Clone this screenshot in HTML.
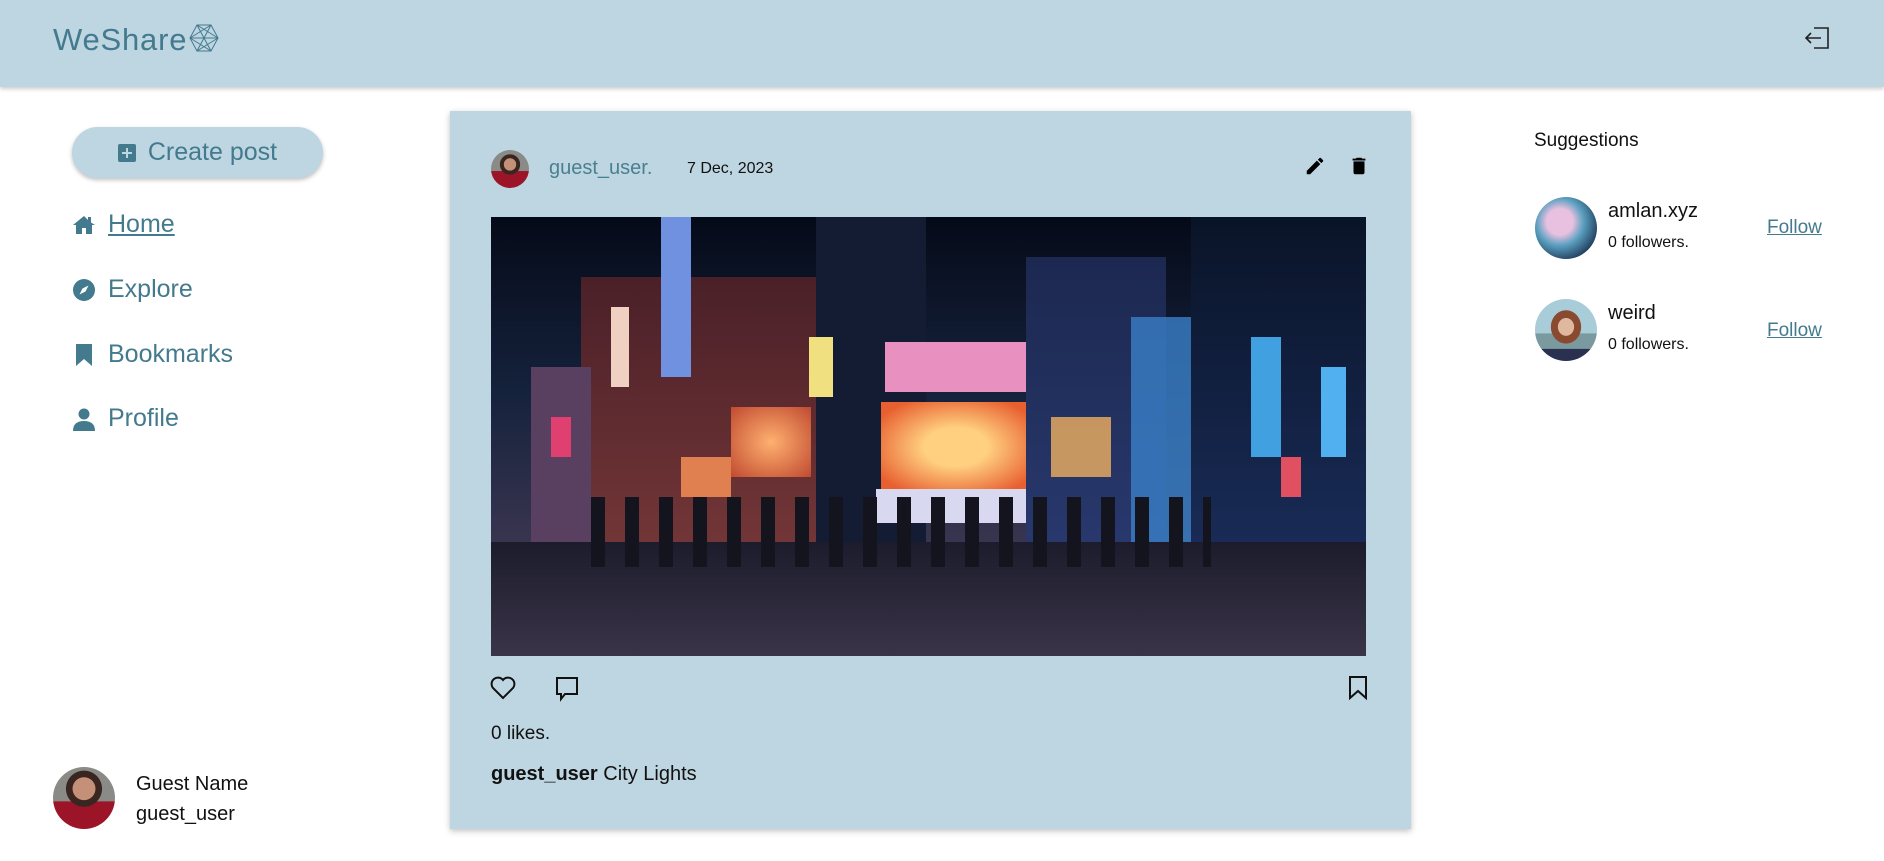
<!DOCTYPE html>
<html><head><meta charset="utf-8"><style>
*{box-sizing:border-box;margin:0;padding:0}
body{width:1884px;height:861px;background:#fff;font-family:"Liberation Sans",sans-serif;position:relative;overflow:hidden;color:#111}
.abs{position:absolute}
.hdr{left:0;top:0;width:1884px;height:87px;background:#bed6e1;box-shadow:0 2px 4px rgba(0,0,0,.2)}
.teal{color:#437a8e}
.nav{left:72px;font-size:25px;display:flex;align-items:center;gap:12px;color:#437a8e}
.nav svg{width:24px;height:24px;fill:#437a8e}
.card{left:450px;top:111px;width:961px;height:718px;background:#bed6e1;box-shadow:0 2px 6px rgba(0,0,0,.25)}
.av{border-radius:50%;overflow:hidden}
.img div{position:absolute}
</style></head><body>
<div class="abs hdr"></div>
<div class="abs teal" style="left:53px;top:22px;font-size:31px;letter-spacing:0.8px">WeShare</div>
<svg class="abs" style="left:189px;top:24px" width="30" height="28" viewBox="0 0 30 28" fill="none" stroke="#437a8e" stroke-width="1"><polygon points="8,1 22,1 29,14 22,27 8,27 1,14"/><path d="M8 1L22 27M22 1L8 27M1 14H29M8 1L29 14M22 1L1 14M1 14L22 27M29 14L8 27"/></svg>
<svg class="abs" style="left:1804px;top:26px" width="26" height="24" viewBox="0 0 26 24" fill="none" stroke="#222" stroke-width="1.6"><path d="M10 2H24V22H10"/><path d="M2 12H17M7 7L2 12L7 17"/></svg>

<div class="abs" style="left:72px;top:127px;width:251px;height:51px;border-radius:26px;background:#bed6e1;box-shadow:0 2px 4px rgba(0,0,0,.25);display:flex;align-items:center;justify-content:center;gap:12px;font-size:25px;color:#437a8e">
<svg width="18" height="18" viewBox="0 0 18 18"><rect width="18" height="18" rx="2" fill="#437a8e"/><path d="M9 4V14M4 9H14" stroke="#bed6e1" stroke-width="2"/></svg>Create post</div>

<div class="abs nav" style="top:210px"><svg viewBox="0 0 24 24"><path d="M12 3L1 12h3v9h6v-6h4v6h6v-9h3L19 9.5V4h-3v3z"/></svg><span style="text-decoration:underline">Home</span></div>
<div class="abs nav" style="top:275px"><svg viewBox="0 0 24 24"><circle cx="12" cy="12" r="11"/><path d="M16.5 7.5L13.5 13.5L7.5 16.5L10.5 10.5Z" fill="#fff"/></svg><span>Explore</span></div>
<div class="abs nav" style="top:340px"><svg viewBox="0 0 24 24"><path d="M4 1H20V23L12 16L4 23Z"/></svg><span>Bookmarks</span></div>
<div class="abs nav" style="top:404px"><svg viewBox="0 0 24 24"><circle cx="12" cy="7" r="5.5"/><path d="M1 24C1 17 5 14 12 14S23 17 23 24Z"/></svg><span>Profile</span></div>

<div class="abs av" style="left:53px;top:767px;width:62px;height:62px;background:radial-gradient(circle at 50% 35%,#c59078 0 22%,#3a2620 23% 35%,transparent 36%),linear-gradient(#8a8a86 0 55%,#9c1428 56%)"></div>
<div class="abs" style="left:136px;top:769px;font-size:20px;line-height:30px">Guest Name<br>guest_user</div>

<div class="abs card"></div>
<div class="abs av" style="left:491px;top:150px;width:38px;height:38px;background:radial-gradient(circle at 50% 38%,#c59078 0 20%,#3a2620 21% 33%,transparent 34%),linear-gradient(#8a8a86 0 55%,#9c1428 56%)"></div>
<div class="abs" style="left:549px;top:157px;font-size:20px;color:#4a7f91">guest_user.</div>
<div class="abs" style="left:687px;top:160px;font-size:16px">7 Dec, 2023</div>
<svg class="abs" style="left:1304px;top:155px" width="22" height="22" viewBox="0 0 24 24"><path d="M3 17.25V21h3.75L17.8 9.94l-3.75-3.75zM20.7 7.04a1 1 0 000-1.41l-2.34-2.34a1 1 0 00-1.41 0l-1.83 1.83 3.75 3.75z"/></svg>
<svg class="abs" style="left:1348px;top:154px" width="22" height="24" viewBox="0 0 24 24"><path d="M6 19a2 2 0 002 2h8a2 2 0 002-2V7H6zM19 4h-3.5l-1-1h-5l-1 1H5v2h14z"/></svg>

<div class="abs img" style="left:491px;top:217px;width:875px;height:439px;overflow:hidden;background:linear-gradient(180deg,#050a18 0%,#15223c 40%,#3a3550 75%,#2a2a40 100%)">
<div style="left:90px;top:60px;width:260px;height:320px;background:linear-gradient(#4a2028,#7a3a3a)"></div>
<div style="left:40px;top:150px;width:60px;height:200px;background:#5a4060"></div>
<div style="left:60px;top:200px;width:20px;height:40px;background:#e04070"></div>
<div style="left:120px;top:90px;width:18px;height:80px;background:#f0d0c0"></div>
<div style="left:170px;top:0;width:30px;height:160px;background:#7090e0"></div>
<div style="left:325px;top:0;width:110px;height:400px;background:#141c34"></div>
<div style="left:318px;top:120px;width:24px;height:60px;background:#f0e080"></div>
<div style="left:394px;top:125px;width:146px;height:50px;background:#e890c0"></div>
<div style="left:390px;top:185px;width:150px;height:90px;background:radial-gradient(#ffd080 30%,#e86030 85%)"></div>
<div style="left:240px;top:190px;width:80px;height:70px;background:radial-gradient(#ffb070,#c04a30)"></div>
<div style="left:190px;top:240px;width:50px;height:40px;background:#e08050"></div>
<div style="left:535px;top:40px;width:140px;height:320px;background:linear-gradient(#1c2850,#2a3a70)"></div>
<div style="left:640px;top:100px;width:60px;height:240px;background:#3a80c8;opacity:.8"></div>
<div style="left:700px;top:0;width:175px;height:400px;background:linear-gradient(#0a1428,#1c3060)"></div>
<div style="left:760px;top:120px;width:30px;height:120px;background:#40a0e0"></div>
<div style="left:790px;top:240px;width:20px;height:40px;background:#e05060"></div>
<div style="left:830px;top:150px;width:25px;height:90px;background:#50b0f0"></div>
<div style="left:560px;top:200px;width:60px;height:60px;background:#f0b060;opacity:.8"></div>
<div style="left:385px;top:272px;width:150px;height:34px;background:#d8d8f0"></div>
<div style="left:0;top:325px;width:875px;height:114px;background:linear-gradient(#1c1c2c,#3a3448)"></div>
<div style="left:100px;top:280px;width:620px;height:70px;background:repeating-linear-gradient(90deg,#14141e 0 14px,transparent 14px 34px)"></div>
</div>

<svg class="abs" style="left:490px;top:676px" width="26" height="24" viewBox="0 0 26 24" fill="none" stroke="#111" stroke-width="2"><path d="M13 22L3 12A5.5 5.5 0 0113 4A5.5 5.5 0 0123 12Z"/></svg>
<svg class="abs" style="left:555px;top:676px" width="24" height="26" viewBox="0 0 24 26" fill="none" stroke="#111" stroke-width="2"><path d="M2 2H22V18H10L6 23V18H2Z"/></svg>
<svg class="abs" style="left:1348px;top:675px" width="20" height="26" viewBox="0 0 20 26" fill="none" stroke="#111" stroke-width="2"><path d="M2 2H18V23L10 16L2 23Z"/></svg>
<div class="abs" style="left:491px;top:723px;font-size:19px">0 likes.</div>
<div class="abs" style="left:491px;top:763px;font-size:20px"><b>guest_user</b> City Lights</div>

<div class="abs" style="left:1534px;top:130px;font-size:19px">Suggestions</div>
<div class="abs av" style="left:1535px;top:197px;width:62px;height:62px;background:radial-gradient(circle at 40% 40%,#e8c0e0 0 25%,#5aa0c0 45%,#1a3050 80%)"></div>
<div class="abs" style="left:1608px;top:200px;font-size:20px">amlan.xyz</div>
<div class="abs" style="left:1608px;top:234px;font-size:16px">0 followers.</div>
<div class="abs teal" style="left:1767px;top:217px;font-size:19px;text-decoration:underline">Follow</div>
<div class="abs av" style="left:1535px;top:299px;width:62px;height:62px;background:radial-gradient(ellipse at 50% 45%,#e0b8a0 0 18%,#8a4a30 19% 34%,transparent 35%),linear-gradient(#a8ccd8 0 55%,#7a9aa0 56% 80%,#2a3050 81%)"></div>
<div class="abs" style="left:1608px;top:302px;font-size:20px">weird</div>
<div class="abs" style="left:1608px;top:336px;font-size:16px">0 followers.</div>
<div class="abs teal" style="left:1767px;top:320px;font-size:19px;text-decoration:underline">Follow</div>
</body></html>
